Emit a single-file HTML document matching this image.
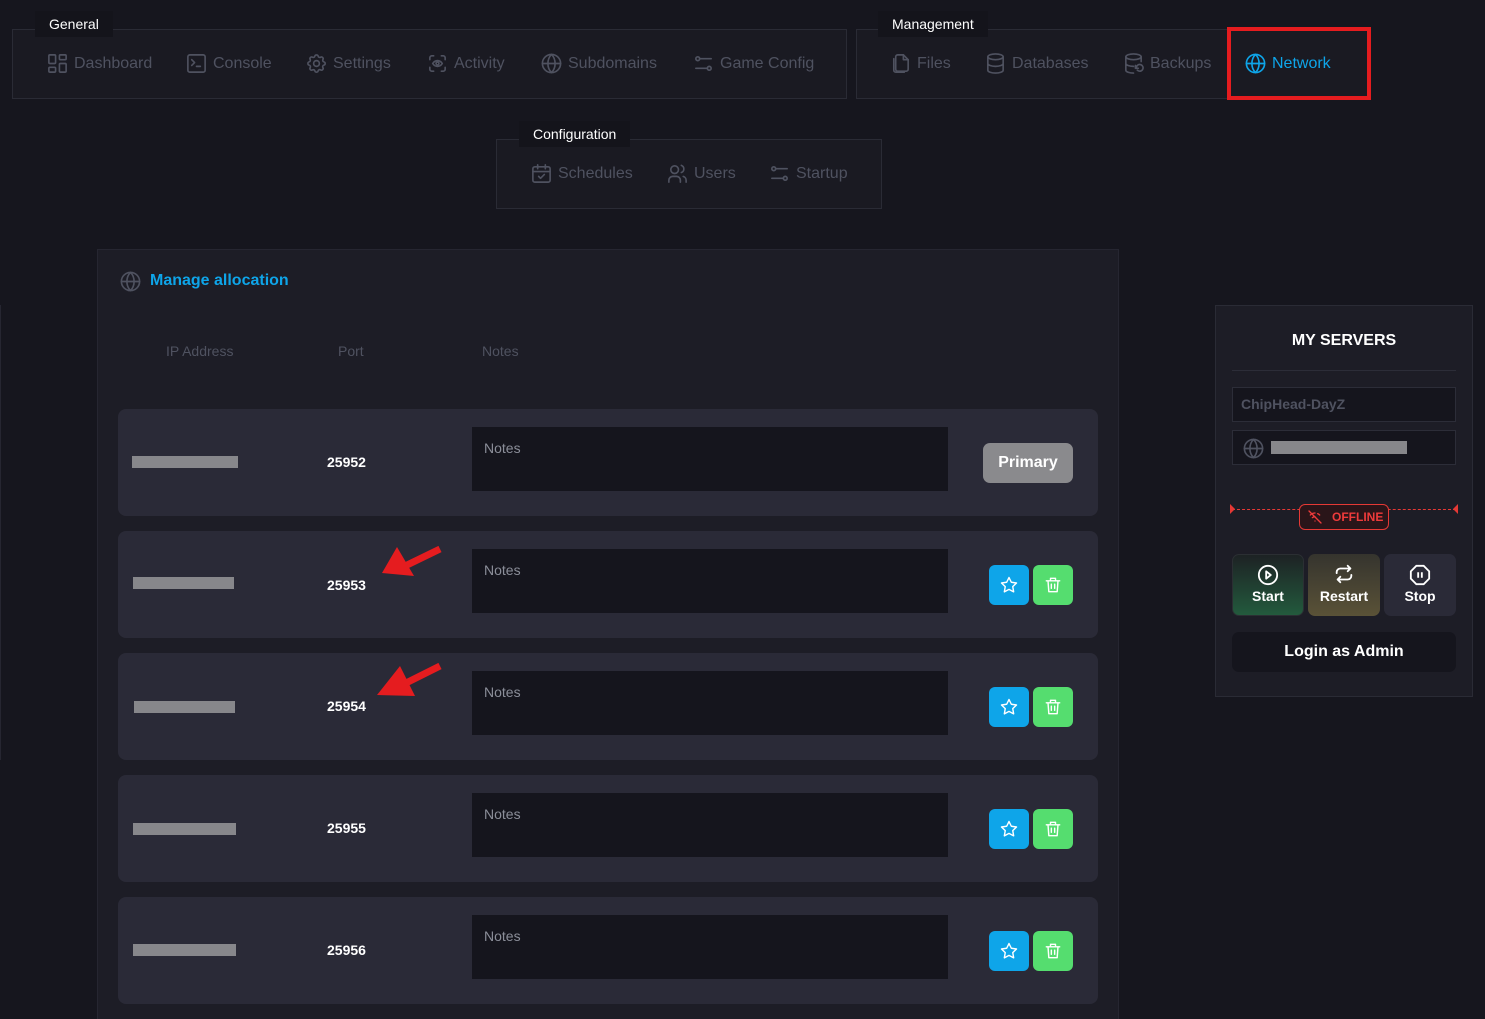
<!DOCTYPE html>
<html><head><meta charset="utf-8">
<style>
*{margin:0;padding:0;box-sizing:border-box}
html,body{width:1485px;height:1019px;overflow:hidden}
body{background:#16161e;font-family:"Liberation Sans",sans-serif;position:relative}
.a{position:absolute}
.grp{position:absolute;border:1px solid #2a2b35;background:#1a1a22}
.lbl{position:absolute;background:#14141b;color:#fff;font-size:14px;padding:0 14px;height:26px;line-height:26px}
.nav{position:absolute;color:#4f5260;font-size:16px;display:flex;align-items:center;gap:5px;white-space:nowrap}
.nav svg{width:23px;height:23px;stroke:currentColor;fill:none;stroke-width:1.7;stroke-linecap:round;stroke-linejoin:round}
.row{position:absolute;left:118px;width:980px;height:107px;background:#2a2a37;border-radius:8px}
.bar{position:absolute;height:12px;background:#87878b;top:47px}
.port{position:absolute;left:209px;top:45px;color:#fff;font-weight:bold;font-size:14px}
.notes{position:absolute;left:354px;top:18px;width:476px;height:64px;background:#15151d;color:#8b8e99;font-size:14px;padding:13px 12px}
.btn{position:absolute;top:34px;width:40px;height:40px;border-radius:6px;display:flex;align-items:center;justify-content:center}
.btn svg{width:20px;height:20px;fill:none;stroke:#fff;stroke-width:1.7;stroke-linejoin:round;stroke-linecap:round}
.star{left:871px;background:#0ea5e9}
.trash{left:915px;background:#55dd6f}
.hdr{position:absolute;top:343px;color:#4f5260;font-size:14px}
</style></head><body>
<div class="a" style="left:0;top:305px;width:1px;height:455px;background:#262631"></div>

<!-- General -->
<div class="grp" style="left:12px;top:29px;width:835px;height:70px"></div>
<div class="lbl" style="left:35px;top:11px">General</div>
<div class="nav" style="left:46px;top:52px"><svg viewBox="0 0 24 24"><rect x="3" y="3" width="7" height="9" rx="1"/><rect x="14" y="3" width="7" height="5" rx="1"/><rect x="14" y="12" width="7" height="9" rx="1"/><rect x="3" y="16" width="7" height="5" rx="1"/></svg>Dashboard</div>
<div class="nav" style="left:185px;top:52px"><svg viewBox="0 0 24 24"><rect x="3" y="3" width="18" height="18" rx="2"/><path d="M7 8l3 3-3 3M12 15h4"/></svg>Console</div>
<div class="nav" style="left:305px;top:52px"><svg viewBox="0 0 24 24"><circle cx="12" cy="12" r="3"/><path d="M10.3 4.3c.4-1.7 3-1.7 3.4 0a1.7 1.7 0 0 0 2.6 1.1c1.5-.9 3.3.8 2.4 2.4a1.7 1.7 0 0 0 1 2.5c1.8.4 1.8 3 0 3.4a1.7 1.7 0 0 0-1 2.6c.9 1.5-.9 3.3-2.4 2.4a1.7 1.7 0 0 0-2.6 1c-.4 1.8-3 1.8-3.4 0a1.7 1.7 0 0 0-2.5-1c-1.6.9-3.3-.9-2.4-2.4a1.7 1.7 0 0 0-1.1-2.6c-1.7-.4-1.7-3 0-3.4a1.7 1.7 0 0 0 1.1-2.5c-.9-1.6.8-3.3 2.4-2.4a1.7 1.7 0 0 0 2.5-1.1z"/></svg>Settings</div>
<div class="nav" style="left:426px;top:52px"><svg viewBox="0 0 24 24"><path d="M4 8V6a2 2 0 0 1 2-2h2M4 16v2a2 2 0 0 0 2 2h2M16 4h2a2 2 0 0 1 2 2v2M16 20h2a2 2 0 0 0 2-2v-2"/><circle cx="12" cy="12" r="1.5"/><path d="M7 12c2.5-4 7.5-4 10 0-2.5 4-7.5 4-10 0"/></svg>Activity</div>
<div class="nav" style="left:540px;top:52px"><svg viewBox="0 0 24 24"><circle cx="12" cy="12" r="9.5"/><path d="M2.5 12h19M12 2.5c-5 5-5 14 0 19M12 2.5c5 5 5 14 0 19"/></svg>Subdomains</div>
<div class="nav" style="left:692px;top:52px"><svg viewBox="0 0 24 24"><circle cx="6" cy="7" r="2"/><path d="M8 7h12"/><circle cx="18" cy="17" r="2"/><path d="M4 17h12"/></svg>Game Config</div>

<!-- Management -->
<div class="grp" style="left:856px;top:29px;width:514px;height:70px"></div>
<div class="lbl" style="left:878px;top:11px">Management</div>
<div class="nav" style="left:889px;top:52px"><svg viewBox="0 0 24 24"><path d="M9 3h6l5 5v10a2 2 0 0 1-2 2H9a2 2 0 0 1-2-2V5a2 2 0 0 1 2-2z"/><path d="M15 3v5h5M5 7v12a2 2 0 0 0 2 2h9"/></svg>Files</div>
<div class="nav" style="left:984px;top:52px"><svg viewBox="0 0 24 24"><ellipse cx="12" cy="5" rx="8" ry="3"/><path d="M4 5v14c0 1.7 3.6 3 8 3s8-1.3 8-3V5M4 12c0 1.7 3.6 3 8 3s8-1.3 8-3"/></svg>Databases</div>
<div class="nav" style="left:1122px;top:52px"><svg viewBox="0 0 24 24"><ellipse cx="12" cy="5" rx="8" ry="3"/><path d="M4 5v14c0 1.7 3.6 3 8 3M20 5v5M4 12c0 1.7 3.6 3 8 3M15 16a3.5 3.5 0 1 1 1 3M14 14v3h3"/></svg>Backups</div>
<div class="nav" style="left:1244px;top:52px;color:#0ea5e9"><svg viewBox="0 0 24 24"><circle cx="12" cy="12" r="9.5"/><path d="M2.5 12h19M12 2.5c-5 5-5 14 0 19M12 2.5c5 5 5 14 0 19"/></svg>Network</div>
<div class="a" style="left:1227px;top:27px;width:144px;height:73px;border:4px solid #e51c1f"></div>

<!-- Configuration -->
<div class="grp" style="left:496px;top:139px;width:386px;height:70px"></div>
<div class="lbl" style="left:519px;top:121px">Configuration</div>
<div class="nav" style="left:530px;top:162px"><svg viewBox="0 0 24 24"><rect x="3" y="5" width="18" height="16" rx="2"/><path d="M3 10h18M8 3v4M16 3v4M9 15l2 2 4-4"/></svg>Schedules</div>
<div class="nav" style="left:666px;top:162px"><svg viewBox="0 0 24 24"><circle cx="9" cy="8" r="4"/><path d="M3 21v-2a4 4 0 0 1 4-4h4a4 4 0 0 1 4 4v2M16 3.5a4 4 0 0 1 0 7.5M21 21v-2a4 4 0 0 0-3-3.9"/></svg>Users</div>
<div class="nav" style="left:768px;top:162px"><svg viewBox="0 0 24 24"><circle cx="6" cy="7" r="2"/><path d="M8 7h12"/><circle cx="18" cy="17" r="2"/><path d="M4 17h12"/></svg>Startup</div>

<!-- Main card -->
<div class="a" style="left:97px;top:249px;width:1022px;height:770px;background:#1d1d26;border:1px solid #262631;border-bottom:none"></div>
<div class="nav" style="left:119px;top:270px;color:#4f5260"><svg viewBox="0 0 24 24"><circle cx="12" cy="12" r="9.5"/><path d="M2.5 12h19M12 2.5c-5 5-5 14 0 19M12 2.5c5 5 5 14 0 19"/></svg></div>
<div class="a" style="left:150px;top:272px;color:#0ea5e9;font-weight:bold;font-size:16px">Manage allocation</div>
<div class="hdr" style="left:166px">IP Address</div>
<div class="hdr" style="left:338px">Port</div>
<div class="hdr" style="left:482px">Notes</div>

<div class="row" style="top:409px"><div class="bar" style="left:14px;width:106px"></div><div class="port">25952</div><div class="notes">Notes</div>
<div class="a" style="left:865px;top:34px;width:90px;height:40px;border-radius:7px;background:#8a8a8d;color:#fff;font-weight:bold;font-size:16px;text-align:center;line-height:40px">Primary</div></div>

<div class="row" style="top:531px"><div class="bar" style="left:15px;width:101px;top:46px"></div><div class="port" style="top:46px">25953</div><div class="notes">Notes</div>
<div class="btn star"><svg viewBox="0 0 24 24"><path d="M12 3l2.8 5.7 6.2.9-4.5 4.4 1.1 6.2L12 17.3 6.4 20.2l1.1-6.2L3 9.6l6.2-.9z"/></svg></div>
<div class="btn trash"><svg viewBox="0 0 24 24"><path d="M4 7h16M9 7V4h6v3M6 7l1 13h10l1-13M10 11v5M14 11v5"/></svg></div></div>

<div class="row" style="top:653px"><div class="bar" style="left:16px;width:101px;top:48px"></div><div class="port" style="top:45px">25954</div><div class="notes">Notes</div>
<div class="btn star"><svg viewBox="0 0 24 24"><path d="M12 3l2.8 5.7 6.2.9-4.5 4.4 1.1 6.2L12 17.3 6.4 20.2l1.1-6.2L3 9.6l6.2-.9z"/></svg></div>
<div class="btn trash"><svg viewBox="0 0 24 24"><path d="M4 7h16M9 7V4h6v3M6 7l1 13h10l1-13M10 11v5M14 11v5"/></svg></div></div>

<div class="row" style="top:775px"><div class="bar" style="left:15px;width:103px;top:48px"></div><div class="port">25955</div><div class="notes">Notes</div>
<div class="btn star"><svg viewBox="0 0 24 24"><path d="M12 3l2.8 5.7 6.2.9-4.5 4.4 1.1 6.2L12 17.3 6.4 20.2l1.1-6.2L3 9.6l6.2-.9z"/></svg></div>
<div class="btn trash"><svg viewBox="0 0 24 24"><path d="M4 7h16M9 7V4h6v3M6 7l1 13h10l1-13M10 11v5M14 11v5"/></svg></div></div>

<div class="row" style="top:897px"><div class="bar" style="left:15px;width:103px;top:47px"></div><div class="port">25956</div><div class="notes">Notes</div>
<div class="btn star"><svg viewBox="0 0 24 24"><path d="M12 3l2.8 5.7 6.2.9-4.5 4.4 1.1 6.2L12 17.3 6.4 20.2l1.1-6.2L3 9.6l6.2-.9z"/></svg></div>
<div class="btn trash"><svg viewBox="0 0 24 24"><path d="M4 7h16M9 7V4h6v3M6 7l1 13h10l1-13M10 11v5M14 11v5"/></svg></div></div>

<!-- arrows -->
<svg class="a" style="left:0;top:0" width="1485" height="1019">
<path d="M440 549 L405 566" stroke="#e51c1f" stroke-width="7"/>
<polygon points="382,573 397,547 414,576" fill="#e51c1f"/>
<path d="M440 666 L402 685" stroke="#e51c1f" stroke-width="7"/>
<polygon points="377,695 400,666 415,696" fill="#e51c1f"/>
</svg>

<!-- Sidebar -->
<div class="a" style="left:1215px;top:305px;width:258px;height:392px;background:#1d1d26;border:1px solid #2a2b35"></div>
<div class="a" style="left:1215px;top:332px;width:258px;text-align:center;color:#fff;font-weight:bold;font-size:16px">MY SERVERS</div>
<div class="a" style="left:1232px;top:370px;width:224px;height:1px;background:#2c2d38"></div>
<div class="a" style="left:1232px;top:387px;width:224px;height:35px;background:#15151d;border:1px solid #2c2d38;color:#4f5260;font-size:14px;font-weight:bold;padding:8px 8px">ChipHead-DayZ</div>
<div class="a" style="left:1232px;top:430px;width:224px;height:35px;background:#15151d;border:1px solid #2c2d38"></div>
<div class="nav" style="left:1242px;top:437px"><svg viewBox="0 0 24 24"><circle cx="12" cy="12" r="9.5"/><path d="M2.5 12h19M12 2.5c-5 5-5 14 0 19M12 2.5c5 5 5 14 0 19"/></svg></div>
<div class="a" style="left:1271px;top:441px;width:136px;height:13px;background:#87878b"></div>
<div class="a" style="left:1232px;top:509px;width:224px;border-top:1px dashed #e53935"></div>
<div class="a" style="left:1230px;top:504px;width:0;height:0;border-top:5px solid transparent;border-bottom:5px solid transparent;border-left:5px solid #e53935"></div>
<div class="a" style="left:1453px;top:504px;width:0;height:0;border-top:5px solid transparent;border-bottom:5px solid transparent;border-right:5px solid #e53935"></div>
<div class="a" style="left:1299px;top:504px;width:90px;height:26px;background:#2a1519;border:1px solid #e53935;border-radius:6px;color:#ef3b3b;font-weight:bold;font-size:12px;line-height:24px;padding-left:32px">OFFLINE</div>
<svg class="a" style="left:1307px;top:509px" width="16" height="16" viewBox="0 0 24 24" fill="none" stroke="#ef3b3b" stroke-width="2" stroke-linecap="round"><path d="M3 3l18 18M5 9c2-2 4-3 7-3M19 9c-1-1-2-1.6-3-2M8 13c1-1 2.5-1.5 4-1.5M12 18h.01"/></svg>

<div class="a" style="left:1232px;top:554px;width:72px;height:62px;border-radius:7px;background:linear-gradient(#1d2224,#235a3d);border:1px solid #2b2f33"></div>
<div class="a" style="left:1308px;top:554px;width:72px;height:62px;border-radius:7px;background:linear-gradient(#35342e,#5a5237)"></div>
<div class="a" style="left:1384px;top:554px;width:72px;height:62px;border-radius:7px;background:#2a2a37"></div>
<svg class="a" style="left:1257px;top:564px" width="22" height="22" viewBox="0 0 24 24" fill="none" stroke="#fff" stroke-width="2"><circle cx="12" cy="12" r="10"/><path d="M10 8l5 4-5 4z" stroke-linejoin="round"/></svg>
<svg class="a" style="left:1333px;top:563px" width="22" height="22" viewBox="0 0 24 24" fill="none" stroke="#fff" stroke-width="2" stroke-linecap="round" stroke-linejoin="round"><path d="M16 3l3 3-3 3M19 6H8a4 4 0 0 0-4 4v1M8 21l-3-3 3-3M5 18h11a4 4 0 0 0 4-4v-1"/></svg>
<svg class="a" style="left:1409px;top:564px" width="22" height="22" viewBox="0 0 24 24" fill="none" stroke="#fff" stroke-width="2"><path d="M8 2h8l6 6v8l-6 6H8l-6-6V8z"/><path d="M10 9v6M14 9v6"/></svg>
<div class="a" style="left:1232px;top:588px;width:72px;text-align:center;color:#fff;font-weight:bold;font-size:14px">Start</div>
<div class="a" style="left:1308px;top:588px;width:72px;text-align:center;color:#fff;font-weight:bold;font-size:14px">Restart</div>
<div class="a" style="left:1384px;top:588px;width:72px;text-align:center;color:#fff;font-weight:bold;font-size:14px">Stop</div>
<div class="a" style="left:1232px;top:632px;width:224px;height:40px;border-radius:7px;background:#15151d;color:#fff;font-weight:bold;font-size:16px;text-align:center;line-height:40px">Login as Admin</div>
</body></html>
